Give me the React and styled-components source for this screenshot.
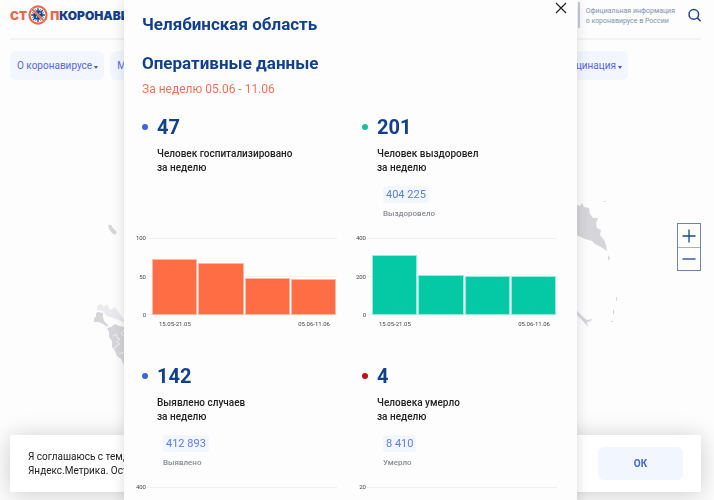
import { memo } from "react";
import styled, { createGlobalStyle } from "styled-components";

const MENU = ["О коронавирусе", "Меры", "Вакцинация"];

const STATS = [
    {
        name: "hospitalized",
        color: "#3e63e0",
        bar: "#ff6d45",
        border: "#ffb9a3",
        count: "47",
        text: "Человек госпитализировано",
        max: 100,
        values: [73, 68, 48, 47],
    },
    {
        name: "recovered",
        color: "#1bbf9c",
        bar: "#04c9a4",
        border: "#8df0dc",
        count: "201",
        text: "Человек выздоровел",
        total: "404 225",
        caption: "Выздоровело",
        max: 400,
        values: [312, 208, 201, 201],
    },
    {
        name: "detected",
        color: "#3e63e0",
        bar: "#3e63e0",
        border: "#a9baf5",
        count: "142",
        text: "Выявлено случаев",
        total: "412 893",
        caption: "Выявлено",
        max: 400,
        values: [310, 240, 180, 142],
    },
    {
        name: "deaths",
        color: "#bd1018",
        bar: "#bd1018",
        border: "#e59a9d",
        count: "4",
        text: "Человека умерло",
        total: "8 410",
        caption: "Умерло",
        max: 20,
        values: [9, 7, 5, 4],
    },
];

const VirusIcon = () => (
    <svg width="20" height="20" viewBox="0 0 20 20" aria-hidden="true">
        <g stroke="#12408c" strokeWidth="1.3" strokeLinecap="round">
            <path d="M10 3.600v12.800M3.600 10h12.800M5.500 5.500l9 9M14.500 5.500l-9 9" />
            <path d="M7.700 4.600l4.600 10.800M12.300 4.600l-4.600 10.800M4.600 7.700l10.800 4.600M4.600 12.300l10.800-4.600" strokeWidth="0.8" />
        </g>
        <circle cx="10" cy="10" r="4.6" fill="#12408c" />
        <circle cx="8.6" cy="12" r="0.7" fill="#fff" />
        <circle cx="12" cy="8.2" r="0.7" fill="#fff" />
        <circle cx="10" cy="10" r="8.6" fill="none" stroke="#e8694c" strokeWidth="2.2" />
        <path d="M4 4l12 12" stroke="#fff" strokeWidth="2.4" />
        <path d="M4 4l12 12" stroke="#e8694c" strokeWidth="1.8" />
    </svg>
);

const SearchIcon = () => (
    <svg width="14" height="14" viewBox="0 0 14 14" fill="none" stroke="#1d4587" strokeWidth="1.5" aria-hidden="true">
        <circle cx="6.8" cy="6.4" r="4.8" />
        <path d="M10.2 9.800l3.400 3.400" />
    </svg>
);

const CloseIcon = () => (
    <svg width="12" height="12" viewBox="0 0 12 12" stroke="#222" strokeWidth="1.2" aria-hidden="true">
        <path d="M1 1l10 10M11 1L1 11" />
    </svg>
);

const RussiaMap = () => (
    <MapImage viewBox="0 0 714 360" aria-hidden="true">
        <g fill="#d5d5da">
            <path d="M108 145L111 145L113 148L117 152L115 155L112 153L109 149Z" />
            <path d="M96 233L98 232L103 233L103 237L104 241L108 245L107 247L103 244L99 242L94 242L94 238L96 237Z" />
            <path d="M107 248L111 247L115 244L119 246L124 247L130 250V292L124 285L121 279L117 276L115 271L112 267L112 261L109 257L109 252Z" />
            <path d="M570 128L577 125L580 126L582 123L584 127L589 128L590 134L593 138L598 138L596 143L597 148L601 150L600 155L604 160L606 165L607 171L601 167L595 164L592 161L585 159L570 152Z" />
            <path d="M608 175L610 178L608 181ZM616 217h1v4h-1zM613 230h1v4h-1zM611 241h2v1h-2zM602 122l4-1v1z" />
            <path d="M570 226L577 231L583 237L587 240L592 239L591 241L587 242L588 247L584 242L577 235Z" />
        </g>
        <path
            d="M97 226L101 224L104 227L107 224L110 230L115 227L119 233L124 239V243L119 240L113 238L107 236L103 231L97 230Z"
            fill="#e9e9ee"
        />
        <path
            d="M113 256l4-2 0 4 3 1-3 3 3 2-4 2-2 3-3-2M124 250l-3 4 3 2M124 272l-5 2"
            fill="none"
            stroke="#f4f4f6"
            strokeWidth="0.9"
        />
    </MapImage>
);

const BarChart = ({ values, max, bar, border }) => (
    <Chart>
        <Plot>
            <Scale>
                <span>{max}</span>
                <span>{max / 2}</span>
                <span>0</span>
            </Scale>
            <Bars>
                {
                    values.map((value, index) => (
                        <Bar
                            key={index}
                            color={bar}
                            $border={border}
                            style={{ height: `${(value / max) * 100}%` }}
                        />
                    ))
                }
            </Bars>
        </Plot>
        <Weeks>
            <span>15.05-21.05</span>
            <span>05.06-11.06</span>
        </Weeks>
    </Chart>
);

const StatCard = memo(function StatCard({ stat }) {
    return (
        <Card>
            <Summary>
                <Count>
                    <Dot color={stat.color} />
                    {stat.count}
                </Count>
                <Description>
                    {stat.text}
                    <br />
                    за неделю
                </Description>
                {
                    stat.total && (
                        <Total>
                            <TotalValue>{stat.total}</TotalValue>
                            <TotalCaption>{stat.caption}</TotalCaption>
                        </Total>
                    )
                }
            </Summary>
            <BarChart {...stat} />
        </Card>
    )
})

export default function App() {
    return (
        <Page>
            <GlobalStyle />
            <Header>
                <Logo href="#">
                    <Accent>СТ</Accent>
                    <VirusIcon />
                    <Accent>П</Accent>
                    КОРОНАВИРУС
                </Logo>
                <HeaderInfo>
                    Официальная информация
                    <br />
                    о коронавирусе в России
                </HeaderInfo>
                <IconButton aria-label="Поиск">
                    <SearchIcon />
                </IconButton>
            </Header>
            <Menu>
                {
                    MENU.map((name) => (
                        <MenuButton key={name}>
                            {name}
                            <Arrow />
                        </MenuButton>
                    ))
                }
            </Menu>
            <MapArea>
                <RussiaMap />
                <ZoomControls>
                    <ZoomButton aria-label="Приблизить">
                        <svg width="14" height="14" viewBox="0 0 14 14" stroke="#1d4587" strokeWidth="1.3">
                            <path d="M0.500 7h13M7 0.500v13" />
                        </svg>
                    </ZoomButton>
                    <ZoomButton aria-label="Отдалить">
                        <svg width="14" height="14" viewBox="0 0 14 14" stroke="#1d4587" strokeWidth="1.3">
                            <path d="M0.500 7h13" />
                        </svg>
                    </ZoomButton>
                </ZoomControls>
            </MapArea>

            <CookieBar>
                <CookieText>
                    Я соглашаюсь с тем, что
                    <br />
                    Яндекс.Метрика. Оставаясь
                </CookieText>
                <OkButton>ОК</OkButton>
            </CookieBar>

            <Overlay>
                <Modal role="dialog" aria-labelledby="region">
                    <ModalHeader>
                        <Title id="region">Челябинская область</Title>
                        <IconButton aria-label="Закрыть">
                            <CloseIcon />
                        </IconButton>
                    </ModalHeader>
                    <Subtitle>Оперативные данные</Subtitle>
                    <Period>За неделю 05.06 - 11.06</Period>
                    <Cards>
                        {STATS.map((stat) => <StatCard key={stat.name} stat={stat} />)}
                    </Cards>
                </Modal>
            </Overlay>
        </Page>
    )
}

const GlobalStyle = createGlobalStyle`
    * {
        box-sizing: border-box;
    }

    body {
        margin: 0;
        overflow: hidden;
        background-color: #fdfdfd;
        font-family: Roboto, "Liberation Sans", sans-serif;
        color: #222;
    }

    button {
        padding: 0;
        border: none;
        background: none;
        font-family: inherit;
        cursor: pointer;
    }

    svg {
        display: block;
    }
`

const Page = styled.div`
    display: flex;
    flex-direction: column;
    min-height: 100vh;
`

const Header = styled.header`
    display: flex;
    align-items: center;
    height: 40px;
    margin: 0 13px 0 10px;
    padding-bottom: 8px;
    border-bottom: 2px solid #f3f3f4;
`

const Logo = styled.a`
    display: flex;
    align-items: center;
    flex: 1;
    color: #12408c;
    font-family: Inter, Roboto, sans-serif;
    font-size: 12px;
    font-weight: 900;
    text-decoration: none;

    svg {
        margin: 0 2px 0 1px;
    }
`

const Accent = styled.span`
    color: #e8694c;
`

const HeaderInfo = styled.div`
    padding: 4px 12px 2px 6px;
    border-left: 2px solid #c3cbdc;
    color: #8092ad;
    font-size: 7px;
    line-height: 10px;
`

const IconButton = styled.button`
    display: flex;
`

const Menu = styled.nav`
    display: flex;
    gap: 6px;
    padding: 11px 86px 0 10px;
`

const MenuButton = styled.button`
    display: flex;
    align-items: center;
    gap: 2px;
    height: 29px;
    padding: 0 6px 0 7px;
    border-radius: 6px;
    background-color: #f1f6ff;
    color: #5a68d6;
    font-size: 10px;

    &:last-child {
        margin-left: auto;
    }
`

const Arrow = styled.span`
    margin-top: 3px;
    border: 2px solid transparent;
    border-top: 3px solid #4357c9;
    border-bottom: none;
`

const MapArea = styled.main`
    position: relative;
    flex: 1;
`

const MapImage = styled.svg`
    width: 100%;
`

const ZoomControls = styled.div`
    position: absolute;
    top: 143px;
    right: 13px;
    display: flex;
    flex-direction: column;
    border: 1px solid #6d86a6;
`

const ZoomButton = styled.button`
    display: flex;
    align-items: center;
    justify-content: center;
    width: 22px;
    height: 23px;

    & + & {
        border-top: 1px solid #a3b0c8;
    }
`

const CookieBar = styled.div`
    position: fixed;
    right: 13px;
    bottom: 8px;
    left: 10px;
    display: flex;
    align-items: center;
    justify-content: space-between;
    padding: 12px 18px;
    background-color: #fff;
    box-shadow: 0 2px 24px rgba(0, 0, 0, 0.2);
`

const CookieText = styled.div`
    font-size: 10px;
    line-height: 14px;
`

const OkButton = styled.button`
    width: 85px;
    height: 33px;
    border-radius: 6px;
    background-color: #f1f6ff;
    color: #4866cc;
    font-size: 10px;
    font-weight: bold;
`

const Overlay = styled.div`
    position: fixed;
    inset: 0;
    display: flex;
    align-items: flex-start;
    justify-content: center;
    padding-right: 13px;
    overflow-y: auto;
    scrollbar-width: none;
`

const Modal = styled.section`
    flex: 0 1 453px;
    background-color: #fdfdfd;
    box-shadow: 0 0 12px rgba(0, 0, 0, 0.14);
`

const ModalHeader = styled.div`
    display: flex;
    align-items: flex-start;
    justify-content: space-between;
    padding: 2px 10px 0 18px;
`

const Title = styled.h1`
    margin: 12px 0 0;
    color: #12408c;
    font-size: 17px;
    line-height: 20px;
`

const Subtitle = styled.h2`
    margin: 19px 18px 0;
    color: #12408c;
    font-size: 17px;
    line-height: 20px;
`

const Period = styled.div`
    margin: 8px 18px 18px;
    color: #ea7458;
    font-size: 12px;
    line-height: 16px;
`

const Cards = styled.div`
    display: grid;
    grid-template-columns: 1fr 1fr;
    padding: 0 3px 0 10px;
`

const Card = styled.article`
    height: 249px;
`

const Summary = styled.div`
    height: 123px;
    padding-left: 23px;
`

const Count = styled.div`
    display: flex;
    align-items: center;
    gap: 9px;
    margin-left: -15px;
    color: #12408c;
    font-size: 20px;
    font-weight: bold;
    line-height: 24px;
`

const Dot = styled.span`
    width: 6px;
    height: 6px;
    border-radius: 50%;
    background-color: ${(props) => props.color};
`

const Description = styled.div`
    margin-top: 8px;
    font-size: 10px;
    font-weight: 500;
    line-height: 14px;
`

const Total = styled.div`
    display: flex;
    flex-direction: column;
    align-items: flex-start;
    margin: 11px 0 0 6px;
`

const TotalValue = styled.div`
    padding: 0 3px;
    border-radius: 3px;
    background-color: #f1f6ff;
    color: #5f7fd8;
    font-size: 11px;
    line-height: 17px;
`

const TotalCaption = styled.div`
    margin-top: 4px;
    color: #858a94;
    font-size: 8px;
    font-weight: 500;
    line-height: 14px;
`

const Chart = styled.div`
    padding-right: 17px;
    color: #444;
    font-size: 6px;
    line-height: 8px;
`

const Plot = styled.div`
    display: flex;
    gap: 1px;
    height: 77px;
`

const Scale = styled.div`
    display: flex;
    flex-direction: column;
    justify-content: space-between;
    width: 12px;
    margin: -4px 0;
    text-align: right;
`

const Bars = styled.div`
    display: flex;
    flex: 1;
    align-items: flex-end;
    gap: 1px;
    padding: 0 1px 0 5px;
    background: linear-gradient(#f0f0f0, #f0f0f0) 0 0 / 100% 1px no-repeat,
        linear-gradient(#f0f0f0, #f0f0f0) 0 50% / 100% 1px no-repeat,
        linear-gradient(#f0f0f0, #f0f0f0) 0 100% / 100% 1px no-repeat;
`

const Bar = styled.div`
    flex: 1;
    border: 1px solid ${(props) => props.$border};
    background-color: ${(props) => props.color};
`

const Weeks = styled.div`
    display: flex;
    justify-content: space-between;
    padding: 5px 7px 0 25px;
`
